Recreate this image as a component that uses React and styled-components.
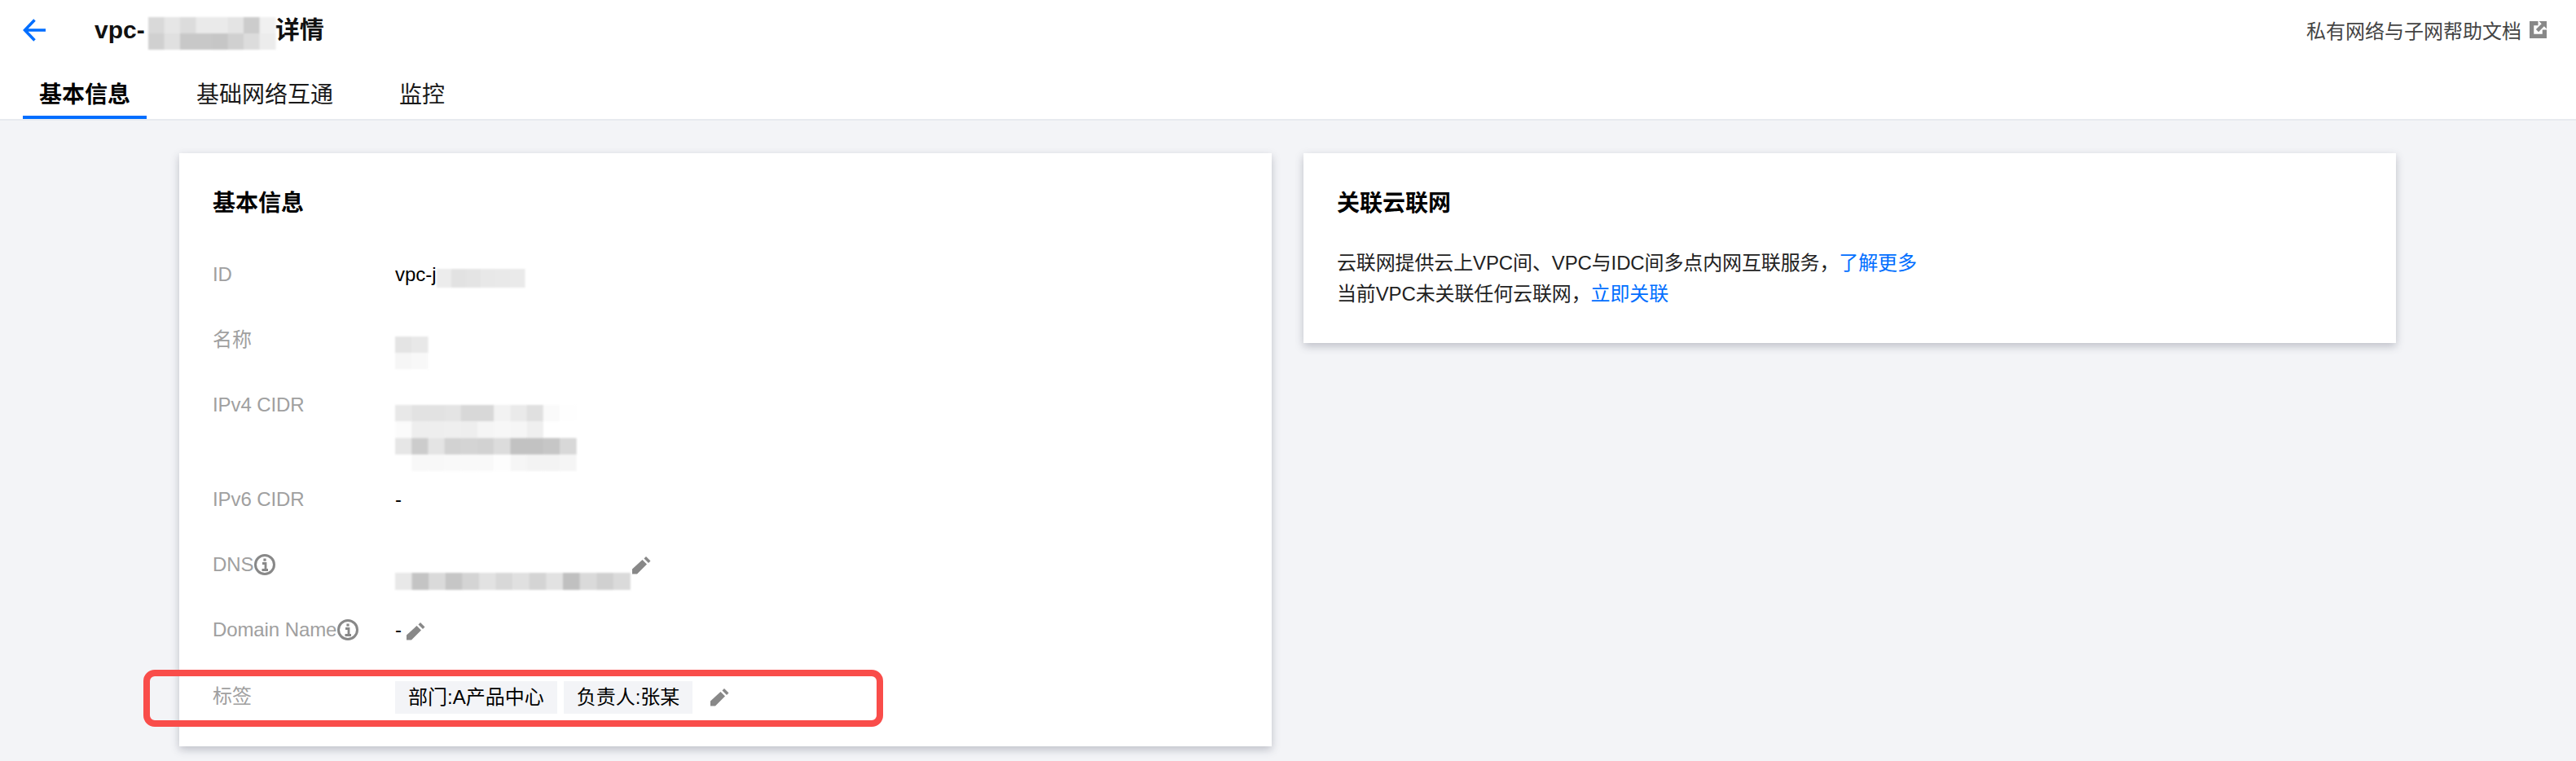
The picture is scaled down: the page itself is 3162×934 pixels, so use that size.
import React from 'react';
import styled, { createGlobalStyle } from 'styled-components';

const Global = createGlobalStyle`
  html, body { margin: 0; padding: 0; background: #f3f4f7; }
  body { width: 3162px; height: 934px; overflow: hidden; font-family: "Liberation Sans", "Noto Sans CJK SC", sans-serif; color: #000; }
`;

const Header = styled.header`
  background: #fff;
  height: 146px;
  border-bottom: 2px solid #e7eaef;
  display: flex;
  flex-direction: column;
  padding: 0 36px 0 28px;
`;
const TopBar = styled.div`
  display: flex;
  align-items: center;
  height: 76px;
`;
const Back = styled.svg`
  width: 30px;
  height: 30px;
  flex: none;
`;
const PageTitle = styled.h1`
  display: flex;
  align-items: center;
  margin: 0 0 0 58px;
  font-size: 30px;
  line-height: 44px;
  font-weight: 700;
  color: #111;
`;
const HelpLink = styled.a`
  margin: -2px 0 0 auto;
  display: flex;
  align-items: center;
  gap: 10px;
  font-size: 24px;
  color: #444;
`;
const Tabs = styled.nav`
  display: flex;
  gap: 41px;
  height: 72px;
`;
const Tab = styled.div`
  padding: 25px 20px 0;
  height: 72px;
  box-sizing: border-box;
  font-size: 28px;
  line-height: 36px;
  font-weight: ${p => (p.$active ? 700 : 400)};
  color: ${p => (p.$active ? '#000' : '#1a1a1a')};
  border-bottom: 4px solid ${p => (p.$active ? '#006eff' : 'transparent')};
`;
const Content = styled.main`
  display: grid;
  grid-template-columns: 1341px 1341px;
  gap: 39px;
  align-items: start;
  padding: 40px 0 0 220px;
`;
const Card = styled.section`
  background: #fff;
  box-shadow: 0 4px 10px rgba(54, 58, 80, 0.28);
  padding: 42px 41px ${p => p.$bottom}px;
`;
const CardTitle = styled.h2`
  margin: 0;
  font-size: 28px;
  line-height: 40px;
  font-weight: 700;
  color: #000;
`;
const Rows = styled.div`
  display: flex;
  flex-direction: column;
  gap: 42px;
  margin-top: 48px;
`;
const Row = styled.div`
  position: relative;
  display: grid;
  grid-template-columns: 224px 1fr;
  height: ${p => p.$h || 38}px;
  font-size: 24px;
  line-height: 38px;
`;
const Label = styled.div`
  display: flex;
  align-items: center;
  height: 38px;
  color: #a0a0a0;
  letter-spacing: -0.1px;
`;
const Value = styled.div`
  display: flex;
  align-items: ${p => (p.$top ? 'flex-start' : 'center')};
  height: 38px;
  color: #000;
`;
const Stack = styled.div`
  display: flex;
  flex-direction: column;
`;
const InfoIcon = styled.svg`
  width: 28px;
  height: 28px;
  flex: none;
`;
const PencilIcon = styled.svg`
  width: 23px;
  height: 22px;
  flex: none;
  margin: ${p => p.$m || '0 0 0 4px'};
`;
const Mask = styled.svg`
  display: block;
  flex: none;
  margin-top: ${p => p.$mt || 0}px;
  margin-left: ${p => p.$ml || 0}px;
  overflow: visible;
  filter: blur(1px);
`;
const Tag = styled.span`
  display: inline-flex;
  align-items: center;
  height: 40px;
  padding: 0 16px;
  margin-right: 8px;
  background: #f3f4f7;
  color: #000;
  font-size: 24px;
`;
const TagValue = styled.div`
  display: flex;
  align-items: center;
  height: 40px;
`;
const RedBox = styled.div`
  position: absolute;
  left: -85px;
  top: -14px;
  width: 908px;
  height: 70px;
  box-sizing: border-box;
  border: 8px solid #f94d4a;
  border-radius: 14px;
  pointer-events: none;
`;
const Desc = styled.p`
  margin: 34px 0 0;
  font-size: 24px;
  line-height: 38px;
  letter-spacing: -0.13px;
  color: #222;
`;
const Link = styled.a`
  color: #006eff;
`;

const Mosaic = ({ rows, cell = 20, rowH = 20, mt, ml, trim = 0 }) => {
  const w = Math.max(...rows.map(r => r.length)) * cell;
  const h = rows.length * rowH - trim;
  return (
    <Mask width={w} height={h} $mt={mt} $ml={ml} viewBox={`0 0 ${w} ${h}`}>
      {rows.flatMap((r, y) =>
        r.map((v, x) => (
          <rect key={`${x}-${y}`} x={x * cell} y={y * rowH} width={cell + 0.5} height={rowH} fill={`rgb(${v},${v},${v})`} />
        ))
      )}
    </Mask>
  );
};

const Info = () => (
  <InfoIcon viewBox="0 0 28 28">
    <circle cx="14" cy="14" r="11.5" fill="none" stroke="#888" strokeWidth="3" />
    <path d="M11 12.5h4v8M10.5 20.5h7.5" fill="none" stroke="#888" strokeWidth="2.8" />
    <rect x="12.4" y="6.5" width="3.2" height="3.2" fill="#888" />
  </InfoIcon>
);

const Pencil = ({ m }) => (
  <PencilIcon viewBox="0 0 23 22" $m={m}>
    <path d="M0 21.5V15.5L12.5 4L18 9.5L6 21.5Z" fill="#888" />
    <path d="M14.5 2.5L17 0L22.5 5.5L20 8Z" fill="#888" />
  </PencilIcon>
);

const External = () => (
  <svg width="21" height="21" viewBox="0 0 20 20">
    <path d="M0 0H10V5H5V15H15V10H20V20H0Z" fill="#888" />
    <path d="M11 0H20V9L17 6L10.5 12.5L7.5 9.5L14 3Z" fill="#888" />
  </svg>
);

export default function App() {
  return (
    <>
      <Global />
      <Header>
        <TopBar>
          <Back viewBox="0 0 30 30">
            <path d="M28 15H3M14.5 2.5L2.5 15L14.5 27.5" fill="none" stroke="#006eff" strokeWidth="3.5" />
          </Back>
          <PageTitle>
            vpc-
            <Mosaic
              mt={8}
              ml={4}
              cell={19.5}
              rows={[
                [217, 230, 220, 234, 234, 228, 204, 240],
                [208, 224, 200, 200, 198, 208, 220, 236]
              ]}
            />
            详情
          </PageTitle>
          <HelpLink>
            私有网络与子网帮助文档
            <External />
          </HelpLink>
        </TopBar>
        <Tabs>
          <Tab $active>基本信息</Tab>
          <Tab>基础网络互通</Tab>
          <Tab>监控</Tab>
        </Tabs>
      </Header>
      <Content>
        <Card $bottom={40}>
          <CardTitle>基本信息</CardTitle>
          <Rows>
            <Row>
              <Label>ID</Label>
              <Value $top>
                vpc-j
                <Mosaic mt={12} cell={18} rowH={23} rows={[[236, 226, 228, 232, 233, 234]]} />
              </Value>
            </Row>
            <Row>
              <Label>名称</Label>
              <Value $top>
                <Mosaic mt={15} cell={20} rowH={20} trim={13} rows={[[228, 232], [246, 248]]} />
              </Value>
            </Row>
            <Row $h={74}>
              <Label>IPv4 CIDR</Label>
              <Stack>
                <Mosaic
                  mt={19}
                  cell={20.2}
                  rowH={20.3}
                  trim={8}
                  rows={[
                    [232, 226, 226, 228, 216, 216, 242, 234, 224, 250, 254],
                    [251, 238, 238, 239, 238, 245, 247, 246, 239, 255, 255],
                    [230, 204, 228, 210, 212, 210, 220, 194, 194, 198, 216],
                    [255, 248, 248, 249, 249, 249, 253, 246, 243, 243, 245]
                  ]}
                />
              </Stack>
            </Row>
            <Row>
              <Label>IPv6 CIDR</Label>
              <Value>-</Value>
            </Row>
            <Row>
              <Label>
                DNS
                <Info />
              </Label>
              <Value $top>
                <Mosaic
                  mt={29}
                  cell={20.6}
                  rowH={21}
                  rows={[[232, 196, 218, 198, 212, 226, 216, 224, 212, 226, 192, 218, 208, 218]]}
                />
                <Pencil m="9px 0 0 3px" />
              </Value>
            </Row>
            <Row $h={40}>
              <Label>
                Domain Name
                <Info />
              </Label>
              <Value>
                -
                <Pencil m="4px 0 0 6px" />
              </Value>
            </Row>
            <Row $h={40}>
              <Label>标签</Label>
              <TagValue>
                <Tag>部门:A产品中心</Tag>
                <Tag>负责人:张某</Tag>
                <Pencil m="0 0 0 14px" />
              </TagValue>
              <RedBox />
            </Row>
          </Rows>
        </Card>
        <Card $bottom={41}>
          <CardTitle>关联云联网</CardTitle>
          <Desc>
            云联网提供云上VPC间、VPC与IDC间多点内网互联服务，<Link>了解更多</Link>
            <br />
            当前VPC未关联任何云联网，<Link>立即关联</Link>
          </Desc>
        </Card>
      </Content>
    </>
  );
}
